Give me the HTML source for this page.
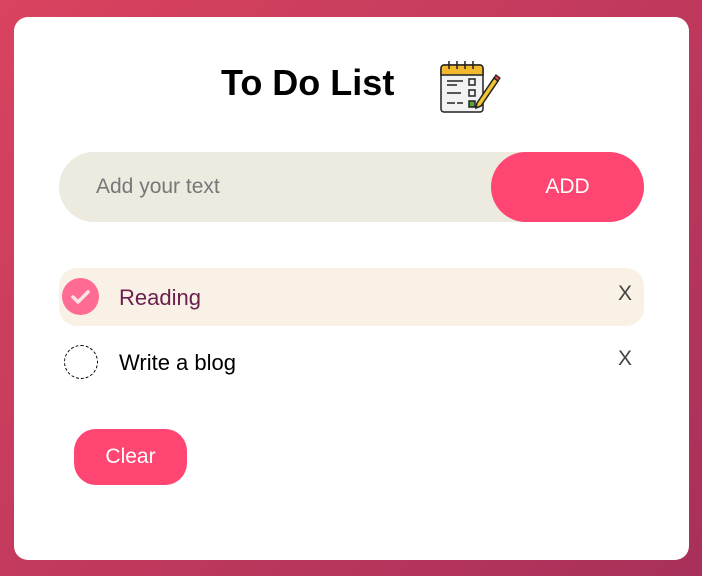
<!DOCTYPE html>
<html><head><style>
*{box-sizing:border-box;margin:0;padding:0}
body{width:702px;height:576px;background:linear-gradient(135deg,#d9435f,#a8305a);font-family:"Liberation Sans",sans-serif;position:relative;overflow:hidden}
.card{position:absolute;left:14px;top:17px;width:675px;height:543px;background:#fff;border-radius:14px}
h1{position:absolute;left:207px;top:45px;font-size:36px;font-weight:bold;color:#000}
.ic{position:absolute;left:425px;top:38px}
.inp{position:absolute;left:45px;top:135px;width:585px;height:70px;background:#edeae0;border-radius:35px}
.inp span{position:absolute;left:37px;top:23px;font-size:21px;color:#777}
.add{position:absolute;right:0;top:0;width:153px;height:70px;background:#ff4571;border-radius:35px;color:#fff;font-size:21px;text-align:center;line-height:70px}
.row{position:absolute;left:45px;width:585px;height:58px;border-radius:18px}
.r1{top:251px;background:#f9f0e6}
.r2{top:316px}
.t{position:absolute;left:60px;top:17px;font-size:22px}
.x{position:absolute;right:12px;top:14px;font-size:21px;color:#444}
.chk{position:absolute;left:3px;top:10px;width:37px;height:37px;border-radius:50%;background:#ff6b92}
.circ{position:absolute;left:5px;top:12px;width:34px;height:34px;border-radius:50%;border:1px dashed #000}
.clear{position:absolute;left:60px;top:412px;width:113px;height:56px;background:#ff4571;border-radius:22px;color:#fff;font-size:21px;text-align:center;line-height:56px}
</style></head><body>
<div class="card">
<h1>To Do List</h1>
<svg class="ic" width="62" height="62" viewBox="0 0 62 62">
<rect x="2" y="10" width="42" height="47" rx="3" fill="#f2f2f2" stroke="#222" stroke-width="1.5"/>
<path d="M2 20V13a3 3 0 0 1 3-3h36a3 3 0 0 1 3 3v7z" fill="#f4b82e" stroke="#222" stroke-width="1.5"/>
<g stroke="#222" stroke-width="1.5" fill="none"><path d="M10 14V6M18 14V6M26 14V6M34 14V6"/>
<path d="M8 26h16M8 30h10M8 38h14M8 48h8M18 48h6"/>
<rect x="30" y="24" width="6" height="6"/><rect x="30" y="35" width="6" height="6"/></g>
<rect x="30" y="46" width="6" height="6" fill="#5aa63c" stroke="#222" stroke-width="1.5"/>
<path d="M38 48l17-25 4 3-17 25-5 2z" fill="#f4c430" stroke="#222" stroke-width="1.5"/>
<path d="M55 23l2-3 4 3-2 3z" fill="#d44" stroke="#222" stroke-width="1.2"/>
</svg>
<div class="inp"><span>Add your text</span><div class="add">ADD</div></div>
<div class="row r1"><div class="chk"><svg width="37" height="37"><path d="M11 19l5 5 10-10" stroke="#fbe3e3" stroke-width="3.5" fill="none" stroke-linecap="round" stroke-linejoin="round"/></svg></div><div class="t" style="color:#6b2050">Reading</div><div class="x">X</div></div>
<div class="row r2"><div class="circ"></div><div class="t" style="color:#000">Write a blog</div><div class="x">X</div></div>
<div class="clear">Clear</div>
</div>
</body></html>
